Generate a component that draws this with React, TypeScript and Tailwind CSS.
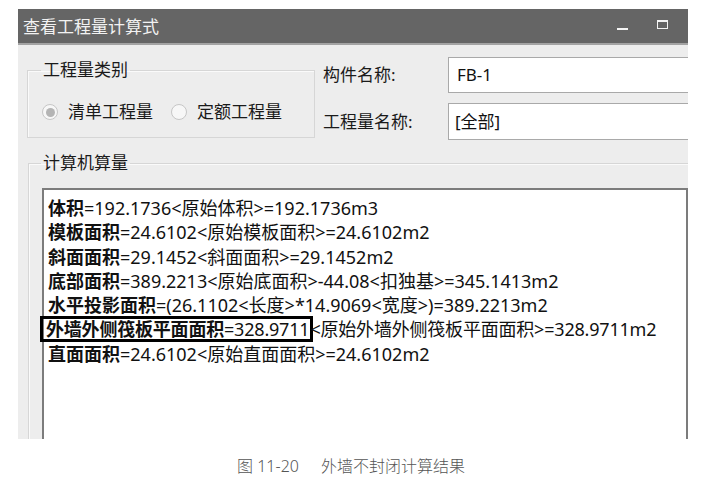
const font = { fontFamily: '"Noto Sans", "Noto Sans CJK SC", sans-serif' };

const lines: [string, string][] = [
  ['体积', '=192.1736<原始体积>=192.1736m3'],
  ['模板面积', '=24.6102<原始模板面积>=24.6102m2'],
  ['斜面面积', '=29.1452<斜面面积>=29.1452m2'],
  ['底部面积', '=389.2213<原始底面积>-44.08<扣独基>=345.1413m2'],
  ['水平投影面积', '=(26.1102<长度>*14.9069<宽度>)=389.2213m2'],
  ['外墙外侧筏板平面面积', '=328.9711<原始外墙外侧筏板平面面积>=328.9711m2'],
  ['直面面积', '=24.6102<原始直面面积>=24.6102m2'],
];

function Radio({ checked, label }: { checked?: boolean; label: string }) {
  return (
    <div className="flex items-center">
      <span className="w-[16px] h-[16px] rounded-full border border-[#c6c6c6] bg-[#f7f7f7] flex items-center justify-center">
        {checked && <span className="w-[9px] h-[9px] rounded-full bg-[#b4b4b4]" />}
      </span>
      <span className="ml-[10px] text-[17px] text-[#1a1a1a]">{label}</span>
    </div>
  );
}

export default function App() {
  return (
    <div className="w-[702px] h-[495px] bg-white overflow-hidden" style={font}>
      <div className="ml-[18px] pt-[9px] w-[670px]">
        {/* title bar */}
        <div className="h-[34px] bg-[#656565] flex items-center">
          <span className="ml-[5px] text-[17px] text-[#f2f2f2] leading-none">查看工程量计算式</span>
          <span className="ml-auto w-[11px] h-[2px] bg-[#f4f4f4] mt-[6px]" />
          <span className="ml-[29px] mr-[20px] w-[11px] h-[9px] border border-t-2 border-[#f4f4f4] mt-[-4px]" />
        </div>
        <div className="h-[2px] bg-[#a3a3a3]" />

        {/* body */}
        <div className="h-[394px] bg-[#ededed]">
          <div className="flex h-[106px]">
            <fieldset className="ml-[9px] mt-[13px] w-[288px] h-[80px] border border-[#d6d6d6] shadow-[inset_1px_1px_0_#fafafa]">
              <legend className="ml-[13px] px-[2px] text-[17px] leading-[24px] text-[#1a1a1a]">工程量类别</legend>
              <div className="flex items-center h-[24px] mt-[18px] ml-[14px] gap-[18px]">
                <Radio checked label="清单工程量" />
                <Radio label="定额工程量" />
              </div>
            </fieldset>

            <div className="ml-[8px] flex flex-col">
              <div className="flex mt-[12px] h-[36px]">
                <span className="w-[125px] flex items-center text-[17px] text-[#1a1a1a]">构件名称:</span>
                <div className="w-[240px] h-full bg-white border border-[#a9a9a9] border-r-0 flex items-center pl-[8px] text-[17px] text-[#111]">
                  FB-1
                </div>
              </div>
              <div className="flex mt-[10px] h-[37px]">
                <span className="w-[125px] flex items-center text-[17px] text-[#1a1a1a]">工程量名称:</span>
                <div className="w-[240px] h-full bg-white border border-[#a9a9a9] border-r-0 flex items-center pl-[6px] text-[17px] text-[#111]">
                  [全部]
                </div>
              </div>
            </div>
          </div>

          <fieldset className="ml-[10px] w-[660px] h-[288px] border border-r-0 border-b-0 border-[#d6d6d6] shadow-[inset_1px_1px_0_#fafafa]">
            <legend className="ml-[12px] px-[2px] text-[17px] leading-[24px] text-[#1a1a1a]">计算机算量</legend>
            <div className="mt-[13px] ml-[13px] w-[646px] h-[251px] bg-white border-2 border-b-0 border-[#7c7c7c] pt-[6px] pl-[4px]">
              {lines.map(([k, v], i) =>
                i === 5 ? (
                  <div key={i} className="text-[18px] leading-[24.3px] text-[#111] whitespace-nowrap tracking-[-0.2px]">
                    <span className="inline-block leading-[20px] pl-[3px] pr-[1px] -ml-[5px] outline-3 outline-black">
                      <b>{k}</b>=328.9711
                    </span>
                    {'<原始外墙外侧筏板平面面积>=328.9711m2'}
                  </div>
                ) : (
                  <div key={i} className="text-[18px] leading-[24.3px] text-[#111] whitespace-nowrap">
                    <b>{k}</b>
                    {v}
                  </div>
                )
              )}
            </div>
          </fieldset>
        </div>
      </div>

      <div className="mt-[15px] text-center text-[16px] text-[#555] font-light">
        图 11-20<span className="inline-block w-[22px]" />外墙不封闭计算结果
      </div>
    </div>
  );
}
